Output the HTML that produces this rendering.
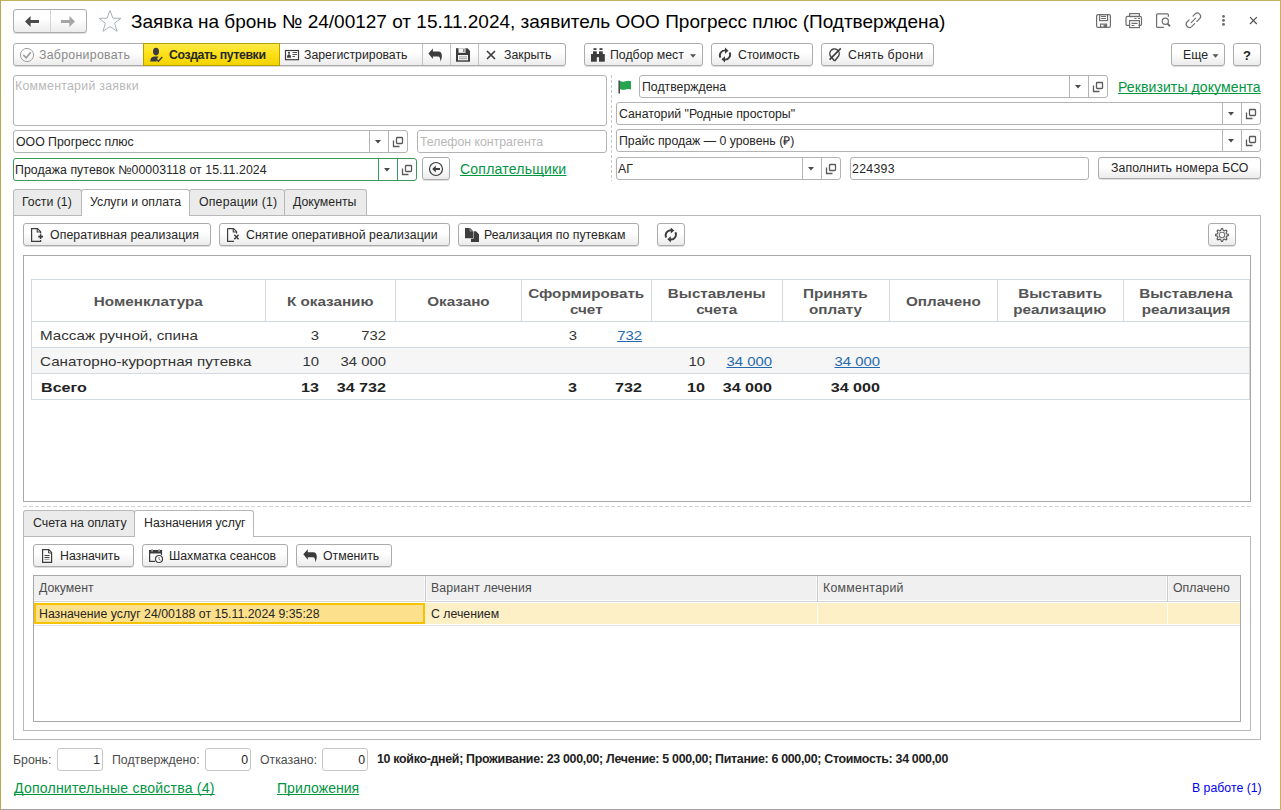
<!DOCTYPE html>
<html><head><meta charset="utf-8">
<style>
*{box-sizing:border-box}
html,body{margin:0;padding:0}
body{width:1281px;height:810px;position:relative;overflow:hidden;background:#fff;font-family:"Liberation Sans",sans-serif;color:#262626}
.a{position:absolute}
.t13{position:absolute;font-size:12.3px;line-height:15px;white-space:nowrap}
.t12{position:absolute;font-size:12px;line-height:14px;white-space:nowrap}
.t14{position:absolute;font-size:14px;line-height:16px;white-space:nowrap}
.btn{position:absolute;border:1px solid #ababab;border-radius:3px;background:linear-gradient(#fff 0%,#fff 40%,#ececec 100%);box-shadow:0 1px 0 rgba(0,0,0,.13)}
.fld{position:absolute;border:1px solid #b3b3b3;border-radius:3px;background:#fff}
.vd{position:absolute;top:0;bottom:0;width:1px;background:#c9c9c9}
.lnk{color:#00963f;text-decoration:underline;text-decoration-skip-ink:none}
.ico{position:absolute}
.tab{position:absolute;border:1px solid #b8b8b8;border-bottom:none;border-radius:3px 3px 0 0;background:#ebebeb}
.vt{position:absolute;font-size:12.4px;line-height:16px;white-space:nowrap;color:#333}
.vb{font-weight:bold}
.vl{color:#2468ad;text-decoration:underline;text-decoration-skip-ink:none}
.hl{position:absolute;background:#d3d9e0}

</style></head><body>
<!-- window border -->
<div class="a" style="left:0;top:0;width:1281px;height:1px;background:#c4b35c"></div>
<div class="a" style="left:0;top:809px;width:1281px;height:1px;background:#a3a3a3"></div>
<div class="a" style="left:0;top:0;width:1px;height:810px;background:#bba951"></div>
<div class="a" style="left:1280px;top:0;width:1px;height:810px;background:#c4b35a"></div>

<!-- nav buttons -->
<div class="btn" style="left:13px;top:9px;width:74px;height:24px"></div>
<div class="a" style="left:50px;top:10px;width:1px;height:22px;background:#d4d4d4"></div>
<svg class="ico" style="left:24px;top:16px" width="16" height="12" viewBox="0 0 16 12"><path d="M1 5.5 L6.6 0 V4 H15 V7 H6.6 V11 Z" fill="#4a4a4a"/></svg>
<svg class="ico" style="left:60px;top:16px" width="16" height="12" viewBox="0 0 16 12"><path d="M15 5.5 L9.4 0 V4 H1 V7 H9.4 V11 Z" fill="#a6a6a6"/></svg>
<!-- star -->
<svg class="ico" style="left:97px;top:9px" width="26" height="24" viewBox="0 0 26 24"><path d="M13 1.5 L15.9 9.2 L24 9.3 L17.6 14.2 L20 22.3 L13 17.5 L6 22.3 L8.4 14.2 L2 9.3 L10.1 9.2 Z" fill="none" stroke="#a9b1b9" stroke-width="1"/></svg>
<div class="a" style="left:131px;top:11px;font-size:19px;line-height:21px;color:#000;white-space:nowrap">Заявка на бронь № 24/00127 от 15.11.2024, заявитель ООО Прогресс плюс (Подтверждена)</div>

<!-- header right icons -->

<!-- toolbar -->

<div class="btn" style="left:13px;top:43px;width:553px;height:23px"></div>
<div class="a" style="left:143px;top:43px;width:137px;height:23px;border:1px solid #b5a000;background:linear-gradient(#ffe94a 0%,#fde21a 45%,#f3d200 100%)"></div>
<div class="a" style="left:422px;top:44px;width:1px;height:21px;background:#c4c4c4"></div>
<div class="a" style="left:450px;top:44px;width:1px;height:21px;background:#c4c4c4"></div>
<div class="a" style="left:478px;top:44px;width:1px;height:21px;background:#c4c4c4"></div>
<div class="t13" style="left:39px;top:48px;color:#8a8a8a;letter-spacing:0.3px">Забронировать</div>
<div class="t13" style="left:169px;top:48px;color:#262626;font-weight:bold;letter-spacing:-0.4px">Создать путевки</div>
<div class="t13" style="left:304px;top:48px;color:#262626">Зарегистрировать</div>
<div class="t13" style="left:504px;top:48px;color:#262626">Закрыть</div>
<div class="btn" style="left:584px;top:43px;width:119px;height:23px"></div>
<div class="t13" style="left:610px;top:48px;color:#262626">Подбор мест</div>
<div class="btn" style="left:711px;top:43px;width:102px;height:23px"></div>
<div class="t13" style="left:738px;top:48px;color:#262626">Стоимость</div>
<div class="btn" style="left:821px;top:43px;width:113px;height:23px"></div>
<div class="t13" style="left:848px;top:48px;color:#262626;letter-spacing:0.3px">Снять брони</div>
<div class="btn" style="left:1171px;top:43px;width:54px;height:23px"></div>
<div class="t13" style="left:1183px;top:48px;color:#262626">Еще</div>
<div class="btn" style="left:1233px;top:43px;width:28px;height:23px"></div>
<div class="t13" style="left:1243px;top:48px;color:#222;font-weight:bold;font-size:13px">?</div>


<!-- fields -->
<div class="fld" style="left:13px;top:75px;width:594px;height:51px;border-color:#b3b3b3"></div>
<div class="t13" style="left:15px;top:79px;color:#b8b8b8;letter-spacing:0.28px">Комментарий заявки</div>
<div class="fld" style="left:13px;top:130px;width:395px;height:23px;border-color:#b3b3b3"></div>
<div class="a" style="left:369px;top:130px;width:1px;height:23px;background:#b3b3b3"></div>
<div class="a" style="left:388px;top:130px;width:1px;height:23px;background:#b3b3b3"></div>
<div class="t13" style="left:16px;top:135px;color:#262626">ООО Прогресс плюс</div>
<div class="fld" style="left:417px;top:130px;width:190px;height:23px;border-color:#b3b3b3"></div>
<div class="t13" style="left:420px;top:135px;color:#b8b8b8">Телефон контрагента</div>
<div class="fld" style="left:13px;top:158px;width:404px;height:23px;border-color:#3a9a5c"></div>
<div class="a" style="left:378px;top:158px;width:1px;height:23px;background:#3a9a5c"></div>
<div class="a" style="left:397px;top:158px;width:1px;height:23px;background:#3a9a5c"></div>
<div class="t13" style="left:15px;top:163px;color:#262626;letter-spacing:0.08px">Продажа путевок №00003118 от 15.11.2024</div>
<div class="btn" style="left:422px;top:157px;width:28px;height:23px"></div>
<div class="t14 lnk" style="left:460px;top:161px;font-size:14.05px;letter-spacing:0.2px">Соплательщики</div>
<div class="a" style="left:611px;top:75px;width:1px;height:106px;background:repeating-linear-gradient(#c8c8c8 0 3px,transparent 3px 5px)"></div>
<div class="fld" style="left:639px;top:75px;width:469px;height:23px;border-color:#b3b3b3"></div>
<div class="a" style="left:1069px;top:75px;width:1px;height:23px;background:#b3b3b3"></div>
<div class="a" style="left:1088px;top:75px;width:1px;height:23px;background:#b3b3b3"></div>
<div class="t13" style="left:642px;top:80px;color:#262626">Подтверждена</div>
<div class="t14 lnk" style="left:1118px;top:79px;font-size:14.05px;letter-spacing:0.08px">Реквизиты документа</div>
<div class="fld" style="left:616px;top:102px;width:645px;height:23px;border-color:#b3b3b3"></div>
<div class="a" style="left:1222px;top:102px;width:1px;height:23px;background:#b3b3b3"></div>
<div class="a" style="left:1241px;top:102px;width:1px;height:23px;background:#b3b3b3"></div>
<div class="t13" style="left:619px;top:107px;color:#262626">Санаторий "Родные просторы"</div>
<div class="fld" style="left:616px;top:129px;width:645px;height:23px;border-color:#b3b3b3"></div>
<div class="a" style="left:1222px;top:129px;width:1px;height:23px;background:#b3b3b3"></div>
<div class="a" style="left:1241px;top:129px;width:1px;height:23px;background:#b3b3b3"></div>
<div class="t13" style="left:619px;top:134px;color:#262626">Прайс продаж — 0 уровень (₽)</div>
<div class="fld" style="left:616px;top:157px;width:225px;height:23px;border-color:#b3b3b3"></div>
<div class="a" style="left:802px;top:157px;width:1px;height:23px;background:#b3b3b3"></div>
<div class="a" style="left:821px;top:157px;width:1px;height:23px;background:#b3b3b3"></div>
<div class="t13" style="left:618px;top:162px;color:#262626">АГ</div>
<div class="fld" style="left:850px;top:157px;width:239px;height:23px;border-color:#b3b3b3"></div>
<div class="t13" style="left:852px;top:162px;color:#262626;letter-spacing:0.3px">224393</div>
<div class="btn" style="left:1098px;top:157px;width:163px;height:22px"></div>
<div class="t13" style="left:1111px;top:161px;color:#262626;letter-spacing:0.08px">Заполнить номера БСО</div>


<!-- tabs -->
<div class="a" style="left:13px;top:215px;width:1248px;height:525px;border:1px solid #b8b8b8"></div>
<div class="tab" style="left:13px;top:189px;width:69px;height:26px"></div>
<div class="tab" style="left:189px;top:189px;width:96px;height:26px"></div>
<div class="tab" style="left:284px;top:189px;width:83px;height:26px"></div>
<div class="tab" style="left:81px;top:189px;width:109px;height:27px;background:#fff"></div>
<div class="a" style="left:82px;top:215px;width:107px;height:1px;background:#fff"></div>
<div class="t13" style="left:22px;top:195px">Гости (1)</div>
<div class="t13" style="left:90px;top:195px">Услуги и оплата</div>
<div class="t13" style="left:199px;top:195px;letter-spacing:0.2px">Операции (1)</div>
<div class="t13" style="left:293px;top:195px">Документы</div>
<div class="btn" style="left:23px;top:223px;width:188px;height:23px"></div>
<div class="t13" style="left:50px;top:228px;letter-spacing:0.1px">Оперативная реализация</div>
<div class="btn" style="left:219px;top:223px;width:231px;height:23px"></div>
<div class="t13" style="left:246px;top:228px;letter-spacing:0.07px">Снятие оперативной реализации</div>
<div class="btn" style="left:458px;top:223px;width:181px;height:23px"></div>
<div class="t13" style="left:484px;top:228px">Реализация по путевкам</div>
<div class="btn" style="left:657px;top:223px;width:28px;height:23px"></div>
<div class="btn" style="left:1208px;top:223px;width:28px;height:23px"></div>
<div class="a" style="left:23px;top:255px;width:1228px;height:247px;border:1px solid #a9a9a9"></div>
<div class="a" style="left:31px;top:279px;width:1219px;height:121px;border:1px solid #d3d9e0"></div>
<div class="a" style="left:32px;top:348px;width:1217px;height:25px;background:#f6f6f6"></div>
<div class="hl" style="left:32px;top:321px;width:1217px;height:1px"></div>
<div class="hl" style="left:32px;top:347px;width:1217px;height:1px"></div>
<div class="hl" style="left:32px;top:373px;width:1217px;height:1px"></div>
<div class="hl" style="left:265px;top:280px;width:1px;height:41px"></div>
<div class="hl" style="left:395px;top:280px;width:1px;height:41px"></div>
<div class="hl" style="left:521px;top:280px;width:1px;height:41px"></div>
<div class="hl" style="left:651px;top:280px;width:1px;height:41px"></div>
<div class="hl" style="left:782px;top:280px;width:1px;height:41px"></div>
<div class="hl" style="left:889px;top:280px;width:1px;height:41px"></div>
<div class="hl" style="left:997px;top:280px;width:1px;height:41px"></div>
<div class="hl" style="left:1123px;top:280px;width:1px;height:41px"></div>
<div class="vt vb" style="left:-1.5px;width:300px;text-align:center;top:294px;color:#555"><span style="display:inline-block;transform:scaleX(1.23)">Номенклатура</span></div>
<div class="vt vb" style="left:180.5px;width:300px;text-align:center;top:294px;color:#555"><span style="display:inline-block;transform:scaleX(1.23)">К оказанию</span></div>
<div class="vt vb" style="left:308px;width:300px;text-align:center;top:294px;color:#555"><span style="display:inline-block;transform:scaleX(1.23)">Оказано</span></div>
<div class="vt vb" style="left:436px;width:300px;text-align:center;top:286px;color:#555"><span style="display:inline-block;transform:scaleX(1.23)">Сформировать</span></div>
<div class="vt vb" style="left:436px;width:300px;text-align:center;top:302px;color:#555"><span style="display:inline-block;transform:scaleX(1.23)">счет</span></div>
<div class="vt vb" style="left:566.5px;width:300px;text-align:center;top:286px;color:#555"><span style="display:inline-block;transform:scaleX(1.23)">Выставлены</span></div>
<div class="vt vb" style="left:566.5px;width:300px;text-align:center;top:302px;color:#555"><span style="display:inline-block;transform:scaleX(1.23)">счета</span></div>
<div class="vt vb" style="left:685.5px;width:300px;text-align:center;top:286px;color:#555"><span style="display:inline-block;transform:scaleX(1.23)">Принять</span></div>
<div class="vt vb" style="left:685.5px;width:300px;text-align:center;top:302px;color:#555"><span style="display:inline-block;transform:scaleX(1.23)">оплату</span></div>
<div class="vt vb" style="left:793px;width:300px;text-align:center;top:294px;color:#555"><span style="display:inline-block;transform:scaleX(1.23)">Оплачено</span></div>
<div class="vt vb" style="left:910px;width:300px;text-align:center;top:286px;color:#555"><span style="display:inline-block;transform:scaleX(1.23)">Выставить</span></div>
<div class="vt vb" style="left:910px;width:300px;text-align:center;top:302px;color:#555"><span style="display:inline-block;transform:scaleX(1.23)">реализацию</span></div>
<div class="vt vb" style="left:1036px;width:300px;text-align:center;top:286px;color:#555"><span style="display:inline-block;transform:scaleX(1.23)">Выставлена</span></div>
<div class="vt vb" style="left:1036px;width:300px;text-align:center;top:302px;color:#555"><span style="display:inline-block;transform:scaleX(1.23)">реализация</span></div>
<div class="vt" style="left:40px;top:328px;color:#333;transform:scaleX(1.225);transform-origin:left center">Массаж ручной, спина</div>
<div class="vt" style="left:40px;top:354px;color:#333;transform:scaleX(1.225);transform-origin:left center">Санаторно-курортная путевка</div>
<div class="vt vb" style="left:41px;top:380px;color:#222;transform:scaleX(1.3);transform-origin:left center">Всего</div>
<div class="vt" style="left:119px;width:200px;text-align:right;top:328px;color:#333;transform:scaleX(1.2);transform-origin:right center"><span class="">3</span></div>
<div class="vt" style="left:186px;width:200px;text-align:right;top:328px;color:#333;transform:scaleX(1.2);transform-origin:right center"><span class="">732</span></div>
<div class="vt" style="left:377px;width:200px;text-align:right;top:328px;color:#333;transform:scaleX(1.2);transform-origin:right center"><span class="">3</span></div>
<div class="vt" style="left:442px;width:200px;text-align:right;top:328px;color:#333;transform:scaleX(1.2);transform-origin:right center"><span class="vl">732</span></div>
<div class="vt" style="left:119px;width:200px;text-align:right;top:354px;color:#333;transform:scaleX(1.2);transform-origin:right center"><span class="">10</span></div>
<div class="vt" style="left:186px;width:200px;text-align:right;top:354px;color:#333;transform:scaleX(1.2);transform-origin:right center"><span class="">34 000</span></div>
<div class="vt" style="left:505px;width:200px;text-align:right;top:354px;color:#333;transform:scaleX(1.2);transform-origin:right center"><span class="">10</span></div>
<div class="vt" style="left:572px;width:200px;text-align:right;top:354px;color:#333;transform:scaleX(1.2);transform-origin:right center"><span class="vl">34 000</span></div>
<div class="vt" style="left:680px;width:200px;text-align:right;top:354px;color:#333;transform:scaleX(1.2);transform-origin:right center"><span class="vl">34 000</span></div>
<div class="vt vb" style="left:119px;width:200px;text-align:right;top:380px;color:#222;transform:scaleX(1.3);transform-origin:right center"><span class="">13</span></div>
<div class="vt vb" style="left:186px;width:200px;text-align:right;top:380px;color:#222;transform:scaleX(1.3);transform-origin:right center"><span class="">34 732</span></div>
<div class="vt vb" style="left:377px;width:200px;text-align:right;top:380px;color:#222;transform:scaleX(1.3);transform-origin:right center"><span class="">3</span></div>
<div class="vt vb" style="left:442px;width:200px;text-align:right;top:380px;color:#222;transform:scaleX(1.3);transform-origin:right center"><span class="">732</span></div>
<div class="vt vb" style="left:505px;width:200px;text-align:right;top:380px;color:#222;transform:scaleX(1.3);transform-origin:right center"><span class="">10</span></div>
<div class="vt vb" style="left:572px;width:200px;text-align:right;top:380px;color:#222;transform:scaleX(1.3);transform-origin:right center"><span class="">34 000</span></div>
<div class="vt vb" style="left:680px;width:200px;text-align:right;top:380px;color:#222;transform:scaleX(1.3);transform-origin:right center"><span class="">34 000</span></div>


<!-- html table -->


<!-- lower -->
<div class="a" style="left:23px;top:506px;width:1228px;height:1px;background:repeating-linear-gradient(90deg,#d2d2d2 0 4px,transparent 4px 6px)"></div>
<div class="a" style="left:23px;top:536px;width:1228px;height:195px;border:1px solid #b8b8b8"></div>
<div class="tab" style="left:23px;top:510px;width:112px;height:26px"></div>
<div class="tab" style="left:134px;top:510px;width:120px;height:27px;background:#fff"></div>
<div class="a" style="left:135px;top:536px;width:118px;height:1px;background:#fff"></div>
<div class="t13" style="left:33px;top:516px">Счета на оплату</div>
<div class="t13" style="left:144px;top:516px">Назначения услуг</div>
<div class="btn" style="left:33px;top:544px;width:101px;height:23px"></div>
<div class="t13" style="left:60px;top:549px">Назначить</div>
<div class="btn" style="left:142px;top:544px;width:146px;height:23px"></div>
<div class="t13" style="left:169px;top:549px">Шахматка сеансов</div>
<div class="btn" style="left:296px;top:544px;width:96px;height:23px"></div>
<div class="t13" style="left:323px;top:549px">Отменить</div>
<div class="a" style="left:33px;top:575px;width:1208px;height:147px;border:1px solid #a8a8a8"></div>
<div class="a" style="left:34px;top:576px;width:1206px;height:24px;background:#f0f0f0"></div>
<div class="a" style="left:34px;top:601px;width:1206px;height:1px;background:#d4d4d4"></div>
<div class="a" style="left:424px;top:576px;width:1px;height:24px;background:#f8f8f8"></div>
<div class="a" style="left:425px;top:576px;width:1px;height:26px;background:#cdcdcd"></div>
<div class="a" style="left:426px;top:576px;width:1px;height:24px;background:#f8f8f8"></div>
<div class="a" style="left:816px;top:576px;width:1px;height:24px;background:#f8f8f8"></div>
<div class="a" style="left:817px;top:576px;width:1px;height:26px;background:#cdcdcd"></div>
<div class="a" style="left:818px;top:576px;width:1px;height:24px;background:#f8f8f8"></div>
<div class="a" style="left:1166px;top:576px;width:1px;height:24px;background:#f8f8f8"></div>
<div class="a" style="left:1167px;top:576px;width:1px;height:26px;background:#cdcdcd"></div>
<div class="a" style="left:1168px;top:576px;width:1px;height:24px;background:#f8f8f8"></div>
<div class="a" style="left:34px;top:603px;width:1206px;height:21px;background:#fdf0c6"></div>
<div class="a" style="left:34px;top:625px;width:1206px;height:1px;background:#e4e4e4"></div>
<div class="a" style="left:34px;top:603px;width:391px;height:21px;background:#fde08c;border:2px solid #f7c200"></div>
<div class="a" style="left:817px;top:603px;width:1px;height:21px;background:#fffdf6"></div>
<div class="a" style="left:1167px;top:603px;width:1px;height:21px;background:#fffdf6"></div>
<div class="t13" style="left:39px;top:581px;color:#4d4d4d">Документ</div>
<div class="t13" style="left:431px;top:581px;color:#4d4d4d;letter-spacing:0.15px">Вариант лечения</div>
<div class="t13" style="left:823px;top:581px;color:#4d4d4d;letter-spacing:0.3px">Комментарий</div>
<div class="t13" style="left:1173px;top:581px;color:#4d4d4d">Оплачено</div>
<div class="t13" style="left:39px;top:607px;color:#262626">Назначение услуг 24/00188 от 15.11.2024 9:35:28</div>
<div class="t13" style="left:431px;top:607px;color:#262626">С лечением</div>


<!-- footer -->
<div class="t13" style="left:13px;top:753px;color:#4d4d4d">Бронь:</div>
<div class="fld" style="left:57px;top:748px;width:46px;height:23px;border-color:#c6c6c6"></div>
<div class="t13" style="left:57px;width:43px;text-align:right;top:753px;color:#262626">1</div>
<div class="t13" style="left:112px;top:753px;color:#4d4d4d">Подтверждено:</div>
<div class="fld" style="left:205px;top:748px;width:46px;height:23px;border-color:#c6c6c6"></div>
<div class="t13" style="left:205px;width:43px;text-align:right;top:753px;color:#262626">0</div>
<div class="t13" style="left:260px;top:753px;color:#4d4d4d">Отказано:</div>
<div class="fld" style="left:322px;top:748px;width:46px;height:23px;border-color:#c6c6c6"></div>
<div class="t13" style="left:322px;width:43px;text-align:right;top:753px;color:#262626">0</div>
<div class="t13" style="left:377px;top:752px;color:#222;font-weight:bold;font-size:12.4px;letter-spacing:-0.3px">10 койко-дней; Проживание: 23 000,00; Лечение: 5 000,00; Питание: 6 000,00; Стоимость: 34 000,00</div>
<div class="t14 lnk" style="left:14px;top:780px;font-size:14.05px;letter-spacing:0.22px">Дополнительные свойства (4)</div>
<div class="t14 lnk" style="left:277px;top:780px;font-size:14.05px">Приложения</div>
<div class="t13" style="left:1192px;top:781px;color:#0000ee">В работе (1)</div>

<svg class="a" style="left:0;top:0" width="1281" height="810" viewBox="0 0 1281 810">
<g fill="none" stroke="#6e6e6e" stroke-width="1.2"><rect x="1096.6" y="14.6" width="13.8" height="12.8" rx="1.5"/><rect x="1099.6" y="14.6" width="8" height="6"/><path d="M1101 16.5 h5 M1101 18.5 h5" stroke-width="1"/><rect x="1100.6" y="24.1" width="6" height="3.3"/></g><rect x="1103.5" y="24.5" width="2.5" height="2.5" fill="#6e6e6e"/><g fill="none" stroke="#6e6e6e" stroke-width="1.2"><rect x="1129.6" y="13.6" width="9.8" height="3"/><path d="M1129 25.4 h-1.5 a1.5 1.5 0 0 1 -1.5 -1.5 v-6 a1.5 1.5 0 0 1 1.5 -1.5 h12.5 a1.5 1.5 0 0 1 1.5 1.5 v6 a1.5 1.5 0 0 1 -1.5 1.5 h-1.5"/><rect x="1129.6" y="20.6" width="9.8" height="7"/><path d="M1131.5 23.4 h6 M1131.5 25.5 h3"/></g><path d="M1134.5 18.5 h2 M1138 18.5 h2" stroke="#6e6e6e" stroke-width="1"/><g fill="none" stroke="#6e6e6e" stroke-width="1.2"><path d="M1168.4 16.7 V14.8 a1 1 0 0 0 -1 -1 H1157.6 a1 1 0 0 0 -1 1 V26.4 a1 1 0 0 0 1 1 H1163.8"/><circle cx="1165.3" cy="21.3" r="3.1"/></g><path d="M1167.5 23.6 L1170 26.2" stroke="#6e6e6e" stroke-width="2"/><g fill="none" stroke="#6e6e6e" stroke-width="1.15" stroke-linecap="round"><path d="M1193 16.1 L1195.07 13.97 A3.3 3.3 0 0 1 1199.73 18.63 L1196.8 21.5"/><path d="M1194.6 23.7 L1191.73 26.63 A3.3 3.3 0 0 1 1187.07 21.97 L1189.2 19.9"/><path d="M1191.2 22.7 L1195.7 18.1"/></g><circle cx="1223.5" cy="16.4" r="1.45" fill="#6e6e6e"/><circle cx="1223.5" cy="20.4" r="1.45" fill="#6e6e6e"/><circle cx="1223.5" cy="24.4" r="1.45" fill="#6e6e6e"/><path d="M1250 17.2 L1256.8 24 M1256.8 17.2 L1250 24" stroke="#4a4a4a" stroke-width="1.1"/><circle cx="27" cy="55" r="6.6" fill="none" stroke="#a0a0a0" stroke-width="1"/><path d="M23.3 55 L26.2 57.8 L30.8 52.2" fill="none" stroke="#9a9a9a" stroke-width="1.6"/><ellipse cx="156" cy="51.6" rx="3" ry="3.8" fill="#3a3a42"/><path d="M150.2 61.6 L150.8 58.5 Q151.5 56.8 154 56.4 L158.5 56.4 L157.5 58 L156.5 61.6 Z" fill="#3a3a42"/><path d="M156.5 59.5 L158.4 61.3 L162.3 57" fill="none" stroke="#3a3a42" stroke-width="1.4"/><rect x="285.5" y="50.5" width="13" height="9.2" fill="none" stroke="#3d3d3d" stroke-width="1.2"/><circle cx="289" cy="52.8" r="1.1" fill="#3d3d3d"/><path d="M287 57.8 Q287 54.5 289 54.3 Q291 54.5 291 57.8 Z" fill="#3d3d3d"/><path d="M292.5 52.5 h4.5 M292.5 54.5 h4.5 M292.5 56.5 h2.5" stroke="#3d3d3d" stroke-width="0.9"/><path transform="translate(428.4,48.5) scale(1.0)" d="M0 5 L4.5 0 V3 H10 C12.5 3 13.5 5 13.5 7.5 C13.5 10 12.5 12 12 13 C12 10.5 11.5 8 10 8 H4.5 V10.5 Z" fill="#3d3d3d"/><path d="M456 48.3 H467.5 L470 50.8 V61.8 H456 Z" fill="#3d3d3d"/><rect x="458.5" y="48.3" width="7" height="4.5" fill="#f8f8f8"/><rect x="463" y="49" width="1.6" height="3" fill="#888"/><rect x="458" y="55" width="10" height="5.3" fill="#f4f4f4"/><path d="M459 56.9 h8 M459 58.7 h8" stroke="#999" stroke-width="0.9"/><path d="M487 51 L495 59 M495 51 L487 59" stroke="#3d3d3d" stroke-width="1.7"/><g fill="#3d3d3d"><rect x="593.5" y="48.2" width="3" height="1.8"/><rect x="599.5" y="48.2" width="3" height="1.8"/><rect x="593" y="51.3" width="3.8" height="3"/><rect x="599" y="51.3" width="3.8" height="3"/><rect x="591" y="54" width="5.8" height="7.7"/><rect x="599" y="54" width="5.8" height="7.7"/><rect x="596" y="54" width="3.5" height="3.2"/></g><path d="M690 54.2 h6 l-3 3.5 z" fill="#555"/><g transform="translate(725,55)" fill="none" stroke="#3d3d3d" stroke-width="1.9"><path d="M-4.6 2.6 A5 5 0 0 1 0.5 -4.6"/><path d="M4.6 -2.6 A5 5 0 0 1 -0.5 4.6"/></g><g transform="translate(725,55)" fill="#3d3d3d"><path d="M0 -7.5 L3.5 -4.3 L0 -1.3 Z"/><path d="M0 7.5 L-3.5 4.3 L0 1.3 Z"/></g><g fill="none" stroke="#3d3d3d" stroke-width="1.4" stroke-linejoin="round"><path d="M831.2 57 A4.7 4.7 0 1 1 838.6 56 L834.6 61"/><path d="M831.2 57 L834.6 61"/><path d="M829.6 59.6 L840.8 48.4" stroke-width="1.6"/></g><path d="M1212.5 54.2 h6 l-3 3.5 z" fill="#555"/><path d="M375 140 h6 l-3 3.5 z" fill="#4a4a4a"/><rect x="396.5" y="137.5" width="6" height="6" fill="none" stroke="#5a5a5a" stroke-width="1.3" rx="0.8"/><path d="M393.5 140.5 v6 h6" fill="none" stroke="#5a5a5a" stroke-width="1.3"/><path d="M384 168 h6 l-3 3.5 z" fill="#4a4a4a"/><rect x="405.5" y="165.5" width="6" height="6" fill="none" stroke="#5a5a5a" stroke-width="1.3" rx="0.8"/><path d="M402.5 168.5 v6 h6" fill="none" stroke="#5a5a5a" stroke-width="1.3"/><path d="M1075 85 h6 l-3 3.5 z" fill="#4a4a4a"/><rect x="1096.5" y="82.5" width="6" height="6" fill="none" stroke="#5a5a5a" stroke-width="1.3" rx="0.8"/><path d="M1093.5 85.5 v6 h6" fill="none" stroke="#5a5a5a" stroke-width="1.3"/><path d="M1228 112 h6 l-3 3.5 z" fill="#4a4a4a"/><rect x="1249.5" y="109.5" width="6" height="6" fill="none" stroke="#5a5a5a" stroke-width="1.3" rx="0.8"/><path d="M1246.5 112.5 v6 h6" fill="none" stroke="#5a5a5a" stroke-width="1.3"/><path d="M1228 139 h6 l-3 3.5 z" fill="#4a4a4a"/><rect x="1249.5" y="136.5" width="6" height="6" fill="none" stroke="#5a5a5a" stroke-width="1.3" rx="0.8"/><path d="M1246.5 139.5 v6 h6" fill="none" stroke="#5a5a5a" stroke-width="1.3"/><path d="M808 167 h6 l-3 3.5 z" fill="#4a4a4a"/><rect x="829.5" y="164.5" width="6" height="6" fill="none" stroke="#5a5a5a" stroke-width="1.3" rx="0.8"/><path d="M826.5 167.5 v6 h6" fill="none" stroke="#5a5a5a" stroke-width="1.3"/><path d="M619.2 80.5 V93.5" stroke="#333" stroke-width="1.4"/><path d="M619.8 80.8 Q622.5 82.2 625.5 81.3 Q628.5 80.4 631 81.3 V89.5 Q628.5 88.6 625.5 89.5 Q622.5 90.4 619.8 89 Z" fill="#27a54e"/><circle cx="436" cy="169" r="6.5" fill="none" stroke="#3d3d3d" stroke-width="1.2"/><path d="M432.2 169 L435.8 165.6 V167.9 H440 V170.1 H435.8 V172.4 Z" fill="#3d3d3d"/><path d="M40.6 233.5 V231.7 L37.5 228.6 H31.6 V241.4 H40.6 V240" fill="none" stroke="#3d3d3d" stroke-width="1.2"/><path d="M37.2 228.6 V232 H40.6" fill="none" stroke="#3d3d3d" stroke-width="1.1"/><path d="M38.2 236.6 H43 M40.6 234.2 V239" stroke="#3d3d3d" stroke-width="1.6"/><path d="M227.6 228.6 H233.5 L236.6 231.7 V233.5 M234 241.4 H227.6 V228.6" fill="none" stroke="#3d3d3d" stroke-width="1.2"/><path d="M233.2 228.6 V232 H236.6" fill="none" stroke="#3d3d3d" stroke-width="1.1"/><path d="M234.3 234.8 L238.6 239.2 M238.6 234.8 L234.3 239.2" stroke="#3d3d3d" stroke-width="1.5"/><path d="M465 228 H470 L473 231 V238.3 H465 Z" fill="#3d3d3d"/><path d="M470.6 231.3 H476 L479 234.3 V242 H471 V238.8 H473.5 V231.3 Z" fill="#3d3d3d"/><path d="M470 228 V231 H473" fill="none" stroke="#aaa" stroke-width="0.8"/><g transform="translate(670.8,234.9)" fill="none" stroke="#3d3d3d" stroke-width="1.9"><path d="M-4.6 2.6 A5 5 0 0 1 0.5 -4.6"/><path d="M4.6 -2.6 A5 5 0 0 1 -0.5 4.6"/></g><g transform="translate(670.8,234.9)" fill="#3d3d3d"><path d="M0 -7.5 L3.5 -4.3 L0 -1.3 Z"/><path d="M0 7.5 L-3.5 4.3 L0 1.3 Z"/></g><path d="M1221.37 228.63 L1222.63 228.63 L1223.34 230.60 L1224.17 230.94 L1226.06 230.05 L1226.95 230.94 L1226.06 232.83 L1226.40 233.66 L1228.37 234.37 L1228.37 235.63 L1226.40 236.34 L1226.06 237.17 L1226.95 239.06 L1226.06 239.95 L1224.17 239.06 L1223.34 239.40 L1222.63 241.37 L1221.37 241.37 L1220.66 239.40 L1219.83 239.06 L1217.94 239.95 L1217.05 239.06 L1217.94 237.17 L1217.60 236.34 L1215.63 235.63 L1215.63 234.37 L1217.60 233.66 L1217.94 232.83 L1217.05 230.94 L1217.94 230.05 L1219.83 230.94 L1220.66 230.60 Z" fill="none" stroke="#555" stroke-width="1.1" stroke-linejoin="round"/><circle cx="1222" cy="235" r="2.7" fill="none" stroke="#777" stroke-width="1.1"/><path d="M42.6 549.6 H48.8 L51.6 552.4 V562.4 H42.6 Z" fill="none" stroke="#3d3d3d" stroke-width="1.2"/><path d="M48.6 549.6 V553 H51.6" fill="none" stroke="#3d3d3d" stroke-width="1"/><path d="M44.5 555.5 h5 M44.5 557.5 h5" stroke="#3d3d3d" stroke-width="1"/><path d="M44.5 559.4 h5" stroke="#999" stroke-width="1"/><path d="M149.6 562 V550.5 H161.5 V555" fill="none" stroke="#3d3d3d" stroke-width="1.2"/><rect x="149.2" y="550" width="12.6" height="3.5" fill="#3d3d3d"/><rect x="151.3" y="549" width="1.6" height="2.6" fill="#aaa"/><rect x="158.3" y="549" width="1.6" height="2.6" fill="#aaa"/><path d="M149.6 561.4 H155" stroke="#3d3d3d" stroke-width="1.2"/><circle cx="159" cy="559" r="3.5" fill="#fff" stroke="#3d3d3d" stroke-width="1.2"/><path d="M159 557 V559.3 L160.5 560.3" fill="none" stroke="#666" stroke-width="0.9"/><path transform="translate(303.3,549.3) scale(1.0)" d="M0 5 L4.5 0 V3 H10 C12.5 3 13.5 5 13.5 7.5 C13.5 10 12.5 12 12 13 C12 10.5 11.5 8 10 8 H4.5 V10.5 Z" fill="#3d3d3d"/></svg>
</body></html>
